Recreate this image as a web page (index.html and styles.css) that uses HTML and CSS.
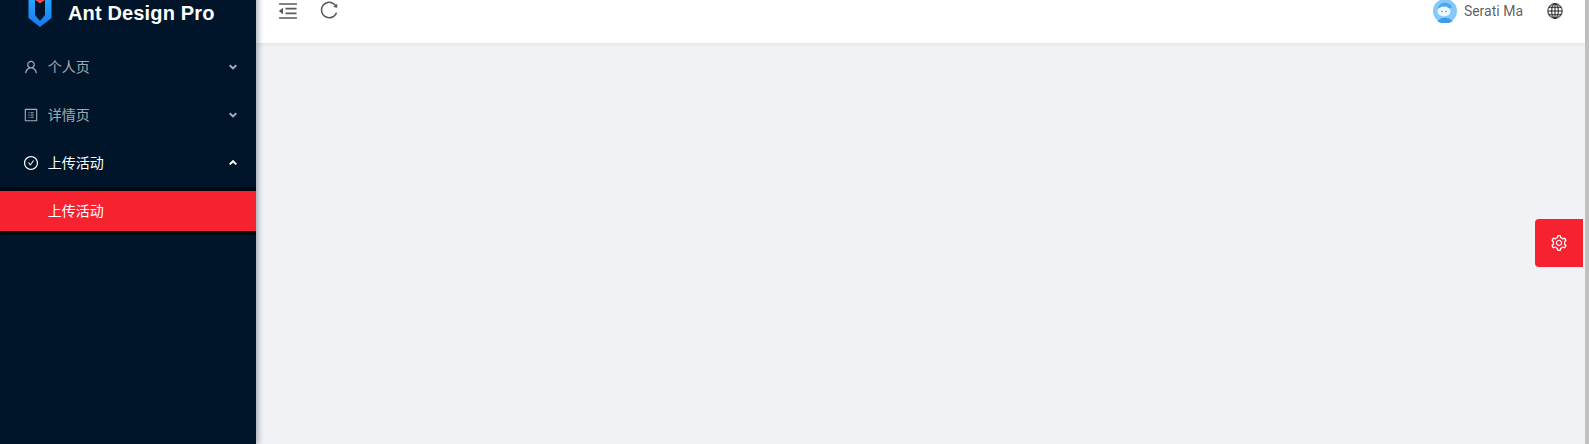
FILE: index.html
```html
<!DOCTYPE html>
<html lang="zh-CN">
<head>
    <meta charset="UTF-8">
    <meta name="viewport" content="width=device-width, initial-scale=1.0">
    <title>Ant Design Pro</title>
    <link rel="stylesheet" href="styles.css">
</head>
<body>

<div class="layout">
    <div class="sidebar">
        <div class="logo">
            <svg class="logo-mark" viewBox="0 0 24 32">
                <defs>
                    <linearGradient id="shield" x1="0" y1="0" x2="0" y2="1">
                        <stop offset="0" stop-color="#29abff"/>
                        <stop offset="1" stop-color="#1677f0"/>
                    </linearGradient>
                </defs>
                <path fill="url(#shield)" d="M0.5 3 L7 1 V20 L12 26 L17 20 V1 L23.5 3 V23 L12 32 L0.5 23 Z"/>
                <path fill="#f5434f" d="M7 0 H17 V5 L12 8.5 L7 5 Z"/>
            </svg>
            <h1>Ant Design Pro</h1>
        </div>

        <ul class="menu">
            <li class="menu-item">
                <svg class="menu-icon" viewBox="64 64 896 896"><path d="M858.5 763.6a374 374 0 0 0-80.6-119.5 375.63 375.63 0 0 0-119.5-80.6c-.4-.2-.8-.3-1.2-.5C719.5 518 760 444.7 760 362c0-137-111-248-248-248S264 225 264 362c0 82.7 40.5 156 102.8 201.1-.4.2-.8.3-1.2.5-44.8 18.9-85 46-119.5 80.6a375.63 375.63 0 0 0-80.6 119.5A371.7 371.7 0 0 0 136 901.8a8 8 0 0 0 8 8.2h60c4.4 0 7.9-3.5 8-7.8 2-77.2 33-149.5 87.8-204.3 56.7-56.7 132-87.9 212.2-87.9s155.5 31.2 212.2 87.9C779 752.7 810 825 812 902.2c.1 4.4 3.6 7.8 8 7.8h60a8 8 0 0 0 8-8.2c-1-47.8-10.9-94.3-29.5-138.2zM512 534c-45.9 0-89.1-17.9-121.6-50.4S340 407.9 340 362c0-45.9 17.9-89.1 50.4-121.6S466.1 190 512 190s89.1 17.9 121.6 50.4S684 316.1 684 362c0 45.9-17.9 89.1-50.4 121.6S557.9 534 512 534z"/></svg>
                <span class="menu-label">个人页</span>
                <svg class="menu-arrow" viewBox="0 0 8 6"><polyline points="0.7,1.2 4,4.4 7.3,1.2"/></svg>
            </li>
            <li class="menu-item">
                <svg class="menu-icon" viewBox="64 64 896 896"><path d="M880 112H144c-17.7 0-32 14.3-32 32v736c0 17.7 14.3 32 32 32h736c17.7 0 32-14.3 32-32V144c0-17.7-14.3-32-32-32zm-40 728H184V184h656v656zM492 400h184c4.4 0 8-3.6 8-8v-48c0-4.4-3.6-8-8-8H492c-4.4 0-8 3.6-8 8v48c0 4.4 3.6 8 8 8zm0 144h184c4.4 0 8-3.6 8-8v-48c0-4.4-3.6-8-8-8H492c-4.4 0-8 3.6-8 8v48c0 4.4 3.6 8 8 8zm0 144h184c4.4 0 8-3.6 8-8v-48c0-4.4-3.6-8-8-8H492c-4.4 0-8 3.6-8 8v48c0 4.4 3.6 8 8 8zM340 368a40 40 0 1 0 80 0 40 40 0 1 0-80 0zm0 144a40 40 0 1 0 80 0 40 40 0 1 0-80 0zm0 144a40 40 0 1 0 80 0 40 40 0 1 0-80 0z"/></svg>
                <span class="menu-label">详情页</span>
                <svg class="menu-arrow" viewBox="0 0 8 6"><polyline points="0.7,1.2 4,4.4 7.3,1.2"/></svg>
            </li>
            <li class="menu-item open">
                <svg class="menu-icon" viewBox="64 64 896 896"><path d="M699 353h-46.9c-10.2 0-19.9 4.9-25.9 13.3L469 584.3l-71.2-98.8c-6-8.3-15.6-13.3-25.9-13.3H325c-6.5 0-10.3 7.4-6.5 12.7l124.6 172.8a31.8 31.8 0 0 0 51.7 0l210.6-292c3.9-5.3.1-12.7-6.4-12.7z"/><path d="M512 64C264.6 64 64 264.6 64 512s200.6 448 448 448 448-200.6 448-448S759.4 64 512 64zm0 820c-205.4 0-372-166.6-372-372s166.6-372 372-372 372 166.6 372 372-166.6 372-372 372z"/></svg>
                <span class="menu-label">上传活动</span>
                <svg class="menu-arrow" viewBox="0 0 8 6"><polyline points="0.7,4.4 4,1.2 7.3,4.4"/></svg>
            </li>
            <li class="submenu">
                <div class="submenu-item">上传活动</div>
            </li>
        </ul>
    </div>

    <div class="main">
        <div class="header">
            <svg class="header-icon" viewBox="64 64 896 896"><path d="M408 442h480c4.4 0 8-3.6 8-8v-56c0-4.4-3.6-8-8-8H408c-4.4 0-8 3.6-8 8v56c0 4.4 3.6 8 8 8zm-8 204c0 4.4 3.6 8 8 8h480c4.4 0 8-3.6 8-8v-56c0-4.4-3.6-8-8-8H408c-4.4 0-8 3.6-8 8v56zm504-486H120c-4.4 0-8 3.6-8 8v56c0 4.4 3.6 8 8 8h784c4.4 0 8-3.6 8-8v-56c0-4.4-3.6-8-8-8zm0 632H120c-4.4 0-8 3.6-8 8v56c0 4.4 3.6 8 8 8h784c4.4 0 8-3.6 8-8v-56c0-4.4-3.6-8-8-8zM115.4 518.9L271.7 642c5.8 4.6 14.4.5 14.4-6.9V388.9c0-7.4-8.5-11.5-14.4-6.9L115.4 505.1a8.74 8.74 0 0 0 0 13.8z"/></svg>
            <svg class="header-icon reload" viewBox="64 64 896 896"><path d="M909.1 209.3l-56.4 44.1C775.8 155.1 656.2 92 521.9 92 290 92 102.3 279.5 102 511.5 101.7 743.7 289.8 932 521.9 932c181.3 0 335.8-115 394.6-276.1 1.5-4.2-.7-8.9-4.9-10.3l-56.7-19.5a8 8 0 0 0-10.1 4.8c-1.8 5-3.8 10-5.9 14.9-17.3 41-42.1 77.8-73.7 109.4A344.77 344.77 0 0 1 655.9 829c-42.3 17.9-87.4 27-133.8 27-46.5 0-91.5-9.1-133.8-27A341.5 341.5 0 0 1 279 755.2a342.16 342.16 0 0 1-73.7-109.4c-17.9-42.4-27-87.4-27-133.9s9.1-91.5 27-133.9c17.3-41 42.1-77.8 73.7-109.4 31.6-31.6 68.4-56.4 109.3-73.8 42.3-17.9 87.4-27 133.8-27 46.5 0 91.5 9.1 133.8 27a341.5 341.5 0 0 1 109.3 73.8c9.9 9.9 19.2 20.4 27.8 31.4l-60.2 47a8 8 0 0 0 3 14.1l175.6 43c5 1.2 9.9-2.6 9.9-7.7l.8-180.9c-.1-6.6-7.8-10.3-13-6.2z"/></svg>
            <div class="header-right">
                <div class="user">
                    <svg class="avatar" viewBox="0 0 24 24">
                        <circle cx="12" cy="12" r="12" fill="#85c9f9"/>
                        <path fill="#3f9cec" d="M4 22 Q12 15 20 22 Q12 27 4 22 Z"/>
                        <path fill="#4aa8f0" d="M6 6 Q12 1 18 6 L19 9 H5 Z"/>
                        <ellipse cx="11" cy="12.5" rx="6.5" ry="5" fill="#eaf5fd"/>
                        <circle cx="9" cy="12.5" r="0.7" fill="#5a7da0"/>
                        <circle cx="13" cy="12.5" r="0.7" fill="#5a7da0"/>
                    </svg>
                    <span class="user-name">Serati Ma</span>
                </div>
                <svg class="globe" viewBox="0 0 16 16">
                    <circle cx="8" cy="8" r="7.2"/>
                    <ellipse cx="8" cy="8" rx="3.4" ry="7.2"/>
                    <line x1="8" y1="0.8" x2="8" y2="15.2"/>
                    <line x1="0.8" y1="8" x2="15.2" y2="8"/>
                    <line x1="1.8" y1="4.4" x2="14.2" y2="4.4"/>
                    <line x1="1.8" y1="11.6" x2="14.2" y2="11.6"/>
                </svg>
            </div>
        </div>
        <div class="settings-button">
            <svg viewBox="64 64 896 896"><path d="M924.8 625.7l-65.5-56c3.1-19 4.7-38.4 4.7-57.8s-1.6-38.8-4.7-57.8l65.5-56a32.03 32.03 0 0 0 9.3-35.2l-.9-2.6a443.74 443.74 0 0 0-79.7-137.9l-1.8-2.1a32.12 32.12 0 0 0-35.1-9.5l-81.3 28.9c-30-24.6-63.5-44-99.7-57.6l-15.7-85a32.05 32.05 0 0 0-25.8-25.7l-2.7-.5c-52.1-9.4-106.9-9.4-159 0l-2.7.5a32.05 32.05 0 0 0-25.8 25.7l-15.8 85.4a351.86 351.86 0 0 0-99 57.4l-81.9-29.1a32 32 0 0 0-35.1 9.5l-1.8 2.1a446.02 446.02 0 0 0-79.7 137.9l-.9 2.6c-4.5 12.5-.8 26.5 9.3 35.2l66.3 56.6c-3.1 18.8-4.6 38-4.6 57.1 0 19.2 1.5 38.4 4.6 57.1L99 625.5a32.03 32.03 0 0 0-9.3 35.2l.9 2.6c18.1 50.4 44.9 96.9 79.7 137.9l1.8 2.1a32.12 32.12 0 0 0 35.1 9.5l81.9-29.1c29.8 24.5 63.1 43.9 99 57.4l15.8 85.4a32.05 32.05 0 0 0 25.8 25.7l2.7.5a449.4 449.4 0 0 0 159 0l2.7-.5a32.05 32.05 0 0 0 25.8-25.7l15.7-85a350 350 0 0 0 99.7-57.6l81.3 28.9a32 32 0 0 0 35.1-9.5l1.8-2.1c34.8-41.1 61.6-87.5 79.7-137.9l.9-2.6c4.5-12.3.8-26.3-9.3-35zM788.3 465.9c2.5 15.1 3.8 30.6 3.8 46.1s-1.3 31-3.8 46.1l-6.6 40.1 74.7 63.9a370.03 370.03 0 0 1-42.6 73.6L721 702.8l-31.4 25.8c-23.9 19.6-50.5 35-79.3 45.8l-38.1 14.3-17.9 97a377.5 377.5 0 0 1-85 0l-17.9-97.2-37.8-14.5c-28.5-10.8-55-26.2-78.7-45.7l-31.4-25.9-93.4 33.2c-17-22.9-31.2-47.6-42.6-73.6l75.5-64.5-6.5-40c-2.4-14.9-3.7-30.3-3.7-45.5 0-15.3 1.2-30.6 3.7-45.5l6.5-40-75.5-64.5c11.3-26.1 25.6-50.7 42.6-73.6l93.4 33.2 31.4-25.9c23.7-19.5 50.2-34.9 78.7-45.7l37.9-14.3 17.9-97.2c28.1-3.2 56.8-3.2 85 0l17.9 97 38.1 14.3c28.7 10.8 55.4 26.2 79.3 45.8l31.4 25.8 92.8-32.9c17 22.9 31.2 47.6 42.6 73.6L781.8 426l6.5 39.9zM512 326c-97.2 0-176 78.8-176 176s78.8 176 176 176 176-78.8 176-176-78.8-176-176-176zm79.2 255.2A111.6 111.6 0 0 1 512 614c-29.9 0-58-11.7-79.2-32.8A111.6 111.6 0 0 1 400 502c0-29.9 11.7-58 32.8-79.2C454 401.6 482.1 390 512 390c29.9 0 58 11.6 79.2 32.8A111.6 111.6 0 0 1 624 502c0 29.9-11.7 58-32.8 79.2z"/></svg>
        </div>
    </div>

    <div class="scrollbar"></div>
</div>

</body>
</html>
```

FILE: styles.css
```css
* {
    margin: 0;
    padding: 0;
    box-sizing: border-box;
}

html, body {
    height: 100%;
    overflow: hidden;
}

body {
    font-family: "Noto Sans", "Noto Sans CJK SC", sans-serif;
    font-size: 14px;
    background-color: #f0f2f5;
}

/* page is scrolled down a little in the shot, so the top bar is cut off */
.layout {
    display: flex;
    height: 465px;
    margin-top: -21px;
}

.sidebar {
    width: 256px;
    flex-shrink: 0;
    background-color: #001529;
    box-shadow: 2px 0 6px rgba(0, 21, 41, 0.35);
    position: relative;
    z-index: 2;
}

.logo {
    display: flex;
    align-items: center;
    height: 64px;
    padding-left: 28px;
}

.logo-mark {
    width: 24px;
    height: 32px;
}

.logo h1 {
    margin-left: 16px;
    padding-top: 4px;
    color: #ffffff;
    font-family: "Liberation Sans", sans-serif;
    font-size: 20px;
    font-weight: 600;
    letter-spacing: 0.15px;
}

.menu {
    list-style: none;
    padding-top: 4px;
}

.menu-item {
    display: flex;
    align-items: center;
    height: 40px;
    margin-bottom: 8px;
    padding: 0 19px 0 24px;
    color: rgba(255, 255, 255, 0.65);
}

.menu-item.open {
    color: #ffffff;
    margin-bottom: 4px;
}

.menu-icon {
    width: 14px;
    height: 14px;
    margin-right: 10px;
    fill: currentColor;
}

.menu-label {
    flex: 1;
    padding-bottom: 2px;
    margin-left: -0.3px;
}

.menu-arrow {
    width: 8px;
    height: 6px;
    fill: none;
    stroke: currentColor;
    stroke-width: 2;
}

.submenu {
    padding: 4px 0;
    background-color: #000c17;
    box-shadow: inset 0 2px 8px rgba(0, 0, 0, 0.45);
}

.submenu-item {
    height: 40px;
    line-height: 40px;
    padding-left: 47.7px;
    background-color: #f7222f;
    color: #ffffff;
}

.main {
    flex: 1;
    min-width: 0;
    position: relative;
}

.header {
    display: flex;
    align-items: center;
    gap: 22px;
    height: 64px;
    padding-left: 22px;
    background-color: #ffffff;
    box-shadow: 0 1px 4px rgba(0, 21, 41, 0.08);
}

.header-icon {
    width: 20px;
    height: 20px;
    fill: rgba(0, 0, 0, 0.65);
}

.header-icon.reload {
    width: 18px;
    height: 18px;
    margin-bottom: 2px;
}

.header-right {
    display: flex;
    align-items: center;
    margin-left: auto;
    padding-right: 22px;
}

.user {
    display: flex;
    align-items: center;
    margin-right: 24px;
}

.avatar {
    width: 24px;
    height: 24px;
    margin-right: 7px;
}

.user-name {
    font-family: Roboto, sans-serif;
    color: rgba(0, 0, 0, 0.65);
}

.globe {
    width: 16px;
    height: 16px;
    fill: none;
    stroke: rgba(0, 0, 0, 0.6);
    stroke-width: 1.4;
}

/* floating settings drawer handle */
.settings-button {
    position: absolute;
    right: 2px;
    top: 240px;
    display: flex;
    align-items: center;
    justify-content: center;
    width: 48px;
    height: 48px;
    background-color: #f7222f;
    border-radius: 4px 0 0 4px;
}

.settings-button svg {
    width: 16px;
    height: 16px;
    fill: #ffffff;
}

.scrollbar {
    width: 4px;
    flex-shrink: 0;
    background-color: #c1c1c1;
}
```
